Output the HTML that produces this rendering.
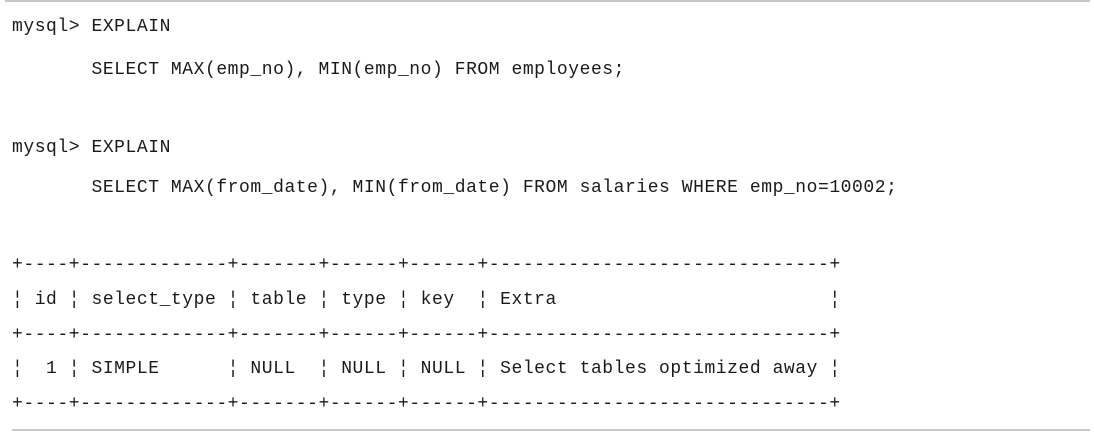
<!DOCTYPE html>
<html><head><meta charset="utf-8"><style>
html,body{margin:0;padding:0;background:#fff;width:1094px;height:432px;overflow:hidden;position:relative}
.l{position:absolute;left:12px;white-space:pre;font-family:"Liberation Mono",monospace;font-size:18px;letter-spacing:0.55px;line-height:20px;color:#1a1a1a}
.r{position:absolute;height:2px;background:#c8c8c8}
</style></head><body>
<div class="r" style="top:0;left:5px;width:1085px"></div>
<div class="l" style="top:17px">mysql&gt; EXPLAIN</div>
<div class="l" style="top:60px">       SELECT MAX(emp_no), MIN(emp_no) FROM employees;</div>
<div class="l" style="top:138px">mysql&gt; EXPLAIN</div>
<div class="l" style="top:178px">       SELECT MAX(from_date), MIN(from_date) FROM salaries WHERE emp_no=10002;</div>
<div class="l" style="top:255px">+----+-------------+-------+------+------+------------------------------+</div>
<div class="l" style="top:290px">¦ id ¦ select_type ¦ table ¦ type ¦ key  ¦ Extra                        ¦</div>
<div class="l" style="top:325px">+----+-------------+-------+------+------+------------------------------+</div>
<div class="l" style="top:359px">¦  1 ¦ SIMPLE      ¦ NULL  ¦ NULL ¦ NULL ¦ Select tables optimized away ¦</div>
<div class="l" style="top:394px">+----+-------------+-------+------+------+------------------------------+</div>
<div class="r" style="top:429px;left:12px;width:1078px"></div>
</body></html>
